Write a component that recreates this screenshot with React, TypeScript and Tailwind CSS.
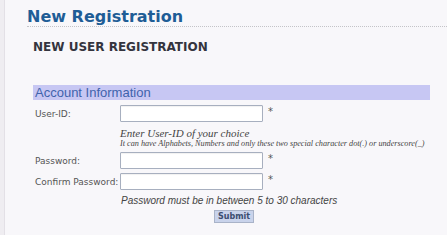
import React from 'react';

const sans = { fontFamily: '"DejaVu Sans", Verdana, sans-serif' };

const Field: React.FC<{ label: string; type?: string; className?: string }> = ({ label, type = 'text', className = '' }) => (
  <div className={`flex items-center ${className}`}>
    <label className="w-[85px] shrink-0 text-[9px] leading-[12px] text-[#555]" style={sans}>
      {label}
    </label>
    <input
      type={type}
      className="w-[143px] h-[17px] bg-white border border-[#a7afbf] rounded-[1px] outline-none shadow-[inset_0_1px_1px_rgba(0,0,0,0.06)]"
    />
    <span className="ml-[5px] self-start mt-[1px] text-[10px] leading-[12px] text-[#555]" style={sans}>
      *
    </span>
  </div>
);

export default function App() {
  return (
    <div className="w-[447px] h-[235px] bg-[#f8f7fa] flex overflow-hidden">
      <div className="w-[5px] shrink-0 bg-[#efedf1] border-r border-[#e3e0e6]" />
      <div className="flex-1 pl-[22px]">
        <h1
          className="mt-[7px] text-[16px] leading-[19px] font-bold text-[#1f5d96] border-b border-dotted border-[#c4c4c8]"
          style={sans}
        >
          New Registration
        </h1>

        <div className="pl-[6px]">
          <h2 className="mt-[13px] text-[12px] leading-[14px] font-bold text-[#34343e]" style={sans}>
            NEW USER REGISTRATION
          </h2>

          <div
            className="mt-[31px] mr-[17px] h-[15px] bg-[#c7c7f3] pl-[2px] text-[13px] leading-[15px] text-[#3f63ac]"
            style={{ fontFamily: '"Liberation Sans", Arial, sans-serif' }}
          >
            Account Information
          </div>

          <div className="pl-[2px]">
            <Field label="User-ID:" className="mt-[5px]" />
            <div className="ml-[85px] mt-[5px] italic text-[#444]" style={{ fontFamily: '"Liberation Serif", "Times New Roman", serif' }}>
              <p className="text-[11px] leading-[12px]">Enter User-ID of your choice</p>
              <p className="text-[8.2px] leading-[9px] whitespace-nowrap">
                It can have Alphabets, Numbers and only these two special character dot(.) or underscore(_)
              </p>
            </div>
            <Field label="Password:" type="password" className="mt-[4px]" />
            <Field label="Confirm Password:" type="password" className="mt-[4px]" />
            <p
              className="ml-[86px] mt-[5px] italic text-[10px] leading-[12px] text-[#444]"
              style={{ fontFamily: '"Liberation Sans", Arial, sans-serif' }}
            >
              Password must be in between 5 to 30 characters
            </p>
            <button
              type="button"
              className="block ml-[179px] mt-[3px] h-[13px] px-[3px] bg-[#c9d3eb] border border-[#a9b3c8] text-[8px] leading-[11px] font-bold text-[#3c4d70]"
              style={sans}
            >
              Submit
            </button>
          </div>
        </div>
      </div>
    </div>
  );
}
